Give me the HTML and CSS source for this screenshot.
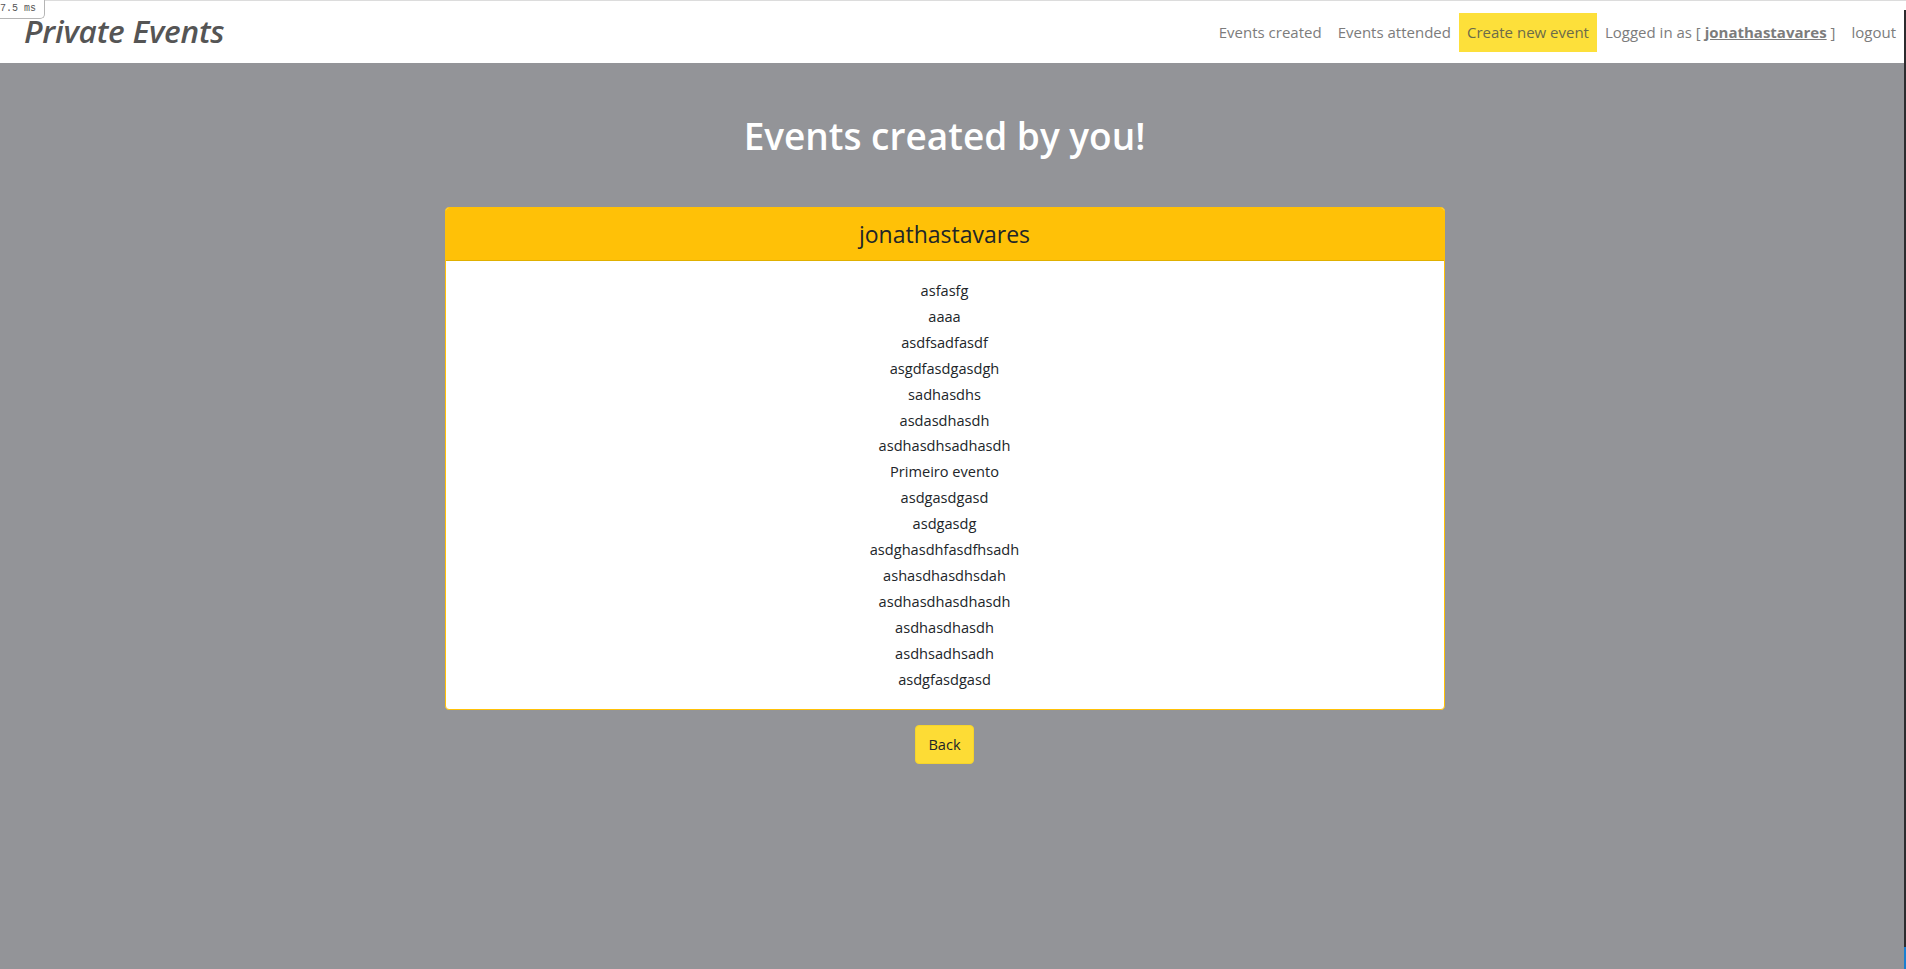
FILE: index.html
```html
<!DOCTYPE html>
<html lang="en">
<head>
<meta charset="utf-8">
<title>Private Events</title>
<link rel="stylesheet" href="styles.css">
</head>
<body>
<div class="timer">7.5 ms</div>
<nav class="navbar">
  <a class="brand" href="#">Private Events</a>
  <ul class="nav">
    <li><a class="nav-link" href="#">Events created</a></li>
    <li><a class="nav-link" href="#">Events attended</a></li>
    <li><a class="nav-link active" href="#">Create new event</a></li>
    <li><span class="nav-link">Logged in as [ <a class="user" href="#">jonathastavares</a> ]</span></li>
    <li><a class="nav-link" href="#">logout</a></li>
  </ul>
</nav>
<main class="main">
  <h1 class="title">Events created by you!</h1>
  <section class="card">
    <header class="card-header">jonathastavares</header>
    <ul class="card-body">
      <li>asfasfg</li>
      <li>aaaa</li>
      <li>asdfsadfasdf</li>
      <li>asgdfasdgasdgh</li>
      <li>sadhasdhs</li>
      <li>asdasdhasdh</li>
      <li>asdhasdhsadhasdh</li>
      <li>Primeiro evento</li>
      <li>asdgasdgasd</li>
      <li>asdgasdg</li>
      <li>asdghasdhfasdfhsadh</li>
      <li>ashasdhasdhsdah</li>
      <li>asdhasdhasdhasdh</li>
      <li>asdhasdhasdh</li>
      <li>asdhsadhsadh</li>
      <li>asdgfasdgasd</li>
    </ul>
  </section>
  <a class="btn" href="#">Back</a>
</main>
<div class="edge"></div>
<div class="edge-blue"></div>
</body>
</html>
```
FILE: styles.css
```css
* { box-sizing: border-box; }
html, body { height: 100%; }
body {
  margin: 0;
  background: #939498;
  font-family: "Open Sans", "Noto Sans", sans-serif;
  color: #212529;
  font-size: 15px;
}
a { text-decoration: none; }

.timer {
  position: absolute;
  top: 0;
  left: 0;
  width: 45px;
  height: 19px;
  padding: 3px 0 0 0;
  background: #fff;
  border: 1px solid #b5b5b5;
  border-top: 0;
  border-left: 0;
  border-bottom-right-radius: 5px;
  font-family: "Liberation Mono", monospace;
  font-size: 10px;
  line-height: 12px;
  color: #555;
  z-index: 2;
}

.navbar {
  display: flex;
  align-items: center;
  justify-content: space-between;
  height: 63px;
  background: #fff;
  border-top: 1px solid #dcdcdc;
  padding: 0 2px 0 24px;
}
.brand {
  font-size: 31.5px;
  line-height: 36px;
  font-style: italic;
  font-weight: 600;
  color: #555;
  margin-top: -2px;
  letter-spacing: -0.2px;
}
.nav {
  display: flex;
  list-style: none;
  margin: 0;
  padding: 0;
}
.nav-link {
  display: block;
  padding: 8px;
  line-height: 23px;
  color: #7c7c7c;
  font-size: 15px;
}
.nav-link.active {
  background: #fde03a;
  color: #6b6b4a;
}
.user {
  color: #7c7c7c;
  font-weight: 700;
  text-decoration: underline;
}

.main {
  display: flex;
  flex-direction: column;
  align-items: center;
  padding-right: 17px;
}
.title {
  margin: 48px 0 0;
  font-size: 37px;
  line-height: 50px;
  font-weight: 600;
  color: #fff;
}
.card {
  width: 1000px;
  margin-top: 46px;
  background: #fff;
  border: 1px solid #ffc107;
  border-radius: 4px;
  overflow: hidden;
}
.card-header {
  background: #ffc107;
  height: 53px;
  display: flex;
  align-items: center;
  justify-content: center;
  font-size: 23px;
  font-weight: 500;
  border-bottom: 1px solid #e0b000;
}
.card-body {
  list-style: none;
  margin: 0;
  padding: 17px 0 16px;
  text-align: center;
  font-size: 14.6px;
  line-height: 25.9px;
}
.btn {
  margin-top: 15px;
  display: inline-block;
  padding: 7px 12px;
  line-height: 23px;
  background: #fddc35;
  border: 1px solid #f5d42c;
  border-radius: 4px;
  color: #212529;
  font-size: 14.6px;
}

.edge {
  position: fixed;
  top: 10px;
  right: 0;
  bottom: 0;
  width: 2px;
  background: #2c2c2e;
}
.edge-blue {
  position: fixed;
  right: 0;
  bottom: 0;
  width: 2px;
  height: 22px;
  background: #1a7fd0;
}
```
